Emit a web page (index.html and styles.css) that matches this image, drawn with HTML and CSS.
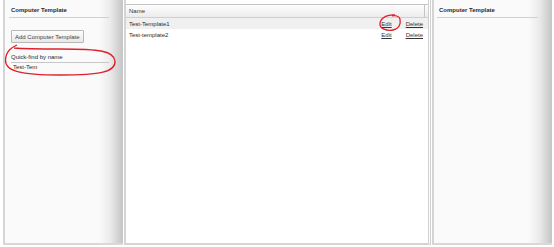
FILE: index.html
```html
<!DOCTYPE html>
<html lang="en">
<head>
  <meta charset="UTF-8" />
  <title>Computer Template</title>
  <link rel="stylesheet" href="styles.css">
</head>
<body>
  <div class="page">
    <div class="side left">
      <div class="side-title">Computer Template</div>
      <button class="add-btn">Add Computer Template</button>
      <div class="quick-find">
        <label for="qf">Quick-find by name</label>
        <input id="qf" type="text" value="Test-Tem" />
      </div>
    </div>

    <div class="list">
      <div class="list-head">
        <div class="col-name">Name</div>
        <div class="col-scroll"></div>
      </div>
      <div class="row hover">
        <span class="row-name">Test-Template1</span>
        <a href="#">Edit</a>
        <a href="#">Delete</a>
      </div>
      <div class="row">
        <span class="row-name">Test-template2</span>
        <a href="#">Edit</a>
        <a href="#">Delete</a>
      </div>
    </div>

    <div class="side right">
      <div class="side-title">Computer Template</div>
    </div>
  </div>

  <svg class="marks" width="554" height="247" viewBox="0 0 554 247">
    <path d="M17 45 C 13 47, 6 50, 5.5 60 C 5 71, 20 75, 60 75 C 100 75, 116 72, 115 61 C 114 51, 100 49, 60 49 C 40 49, 25 49, 14 48"
          fill="none" stroke="#e0202a" stroke-width="1.3"/>
    <path d="M395 15 C 389 14, 381 17, 380 23 C 379 29, 387 31, 393 30 C 399 29, 401 24, 400 19 C 399 16, 395 15, 392 16"
          fill="none" stroke="#e0202a" stroke-width="1.3"/>
  </svg>
</body>
</html>
```

FILE: styles.css
```css
* {
  box-sizing: border-box;
  font-family: 'Liberation Sans', Arial, sans-serif;
}
body {
  margin: 0;
  background: #fff;
  color: #2a2a2a;
  font-size: 6px;
}
.page {
  display: flex;
  height: 245px;
  padding: 0 2px 0 3px;
  gap: 1px;
}
.side {
  display: flex;
  flex-direction: column;
  border-left: 2px solid #d4d4d4;
  border-bottom: 2px solid #d8d8d8;
  background: linear-gradient(to right, #fafafa 80%, #ebebeb 89%, #c4c4c4 100%);
}
.side.left {
  width: 120px;
  padding: 0 14px 0 4px;
}
.side.right {
  width: 120px;
  padding: 0 14px 0 3px;
}
.side-title {
  font-weight: bold;
  padding: 7px 0 4px 2px;
  border-bottom: 1px solid #d0d0d0;
}
.add-btn {
  align-self: flex-start;
  margin: 12px 0 0 2px;
  height: 13px;
  padding: 0 3px;
  font-size: 6px;
  color: #444;
  border: 1px solid #b8b8b8;
  border-radius: 1px;
  background: linear-gradient(#fdfdfd, #e8e8e8);
}
.quick-find {
  display: flex;
  flex-direction: column;
  margin: 10px 0 0 2px;
}
.quick-find label {
  line-height: 8px;
}
.quick-find input {
  margin-top: 1px;
  height: 9px;
  padding: 0 2px;
  font-size: 6px;
  color: #2a2a2a;
  border: none;
  border-top: 1px solid #c8c8c8;
  background: transparent;
}
.list {
  flex: 1;
  display: flex;
  flex-direction: column;
  padding-top: 4px;
  border-left: 2px solid #d4d4d4;
  border-right: 3px double #cfcfcf;
  border-bottom: 2px solid #d4d4d4;
  background: #fff;
}
.list-head {
  display: flex;
  height: 14px;
  border-top: 1px solid #c4c4c4;
  border-bottom: 1px solid #cfcfcf;
  background: linear-gradient(#fdfdfd, #ececec);
}
.col-name {
  flex: 1;
  padding: 3px 0 0 3px;
  color: #333;
}
.col-scroll {
  width: 4px;
  border-left: 1px solid #c4c4c4;
}
.row {
  display: flex;
  align-items: center;
  height: 11px;
  padding: 0 5px 0 3px;
}
.row.hover {
  background: #f0f0f0;
}
.row-name {
  flex: 1;
}
.row a {
  color: #333;
  text-decoration: underline;
  margin-left: 14px;
}
.marks {
  position: absolute;
  top: 0;
  left: 0;
  pointer-events: none;
}
```
